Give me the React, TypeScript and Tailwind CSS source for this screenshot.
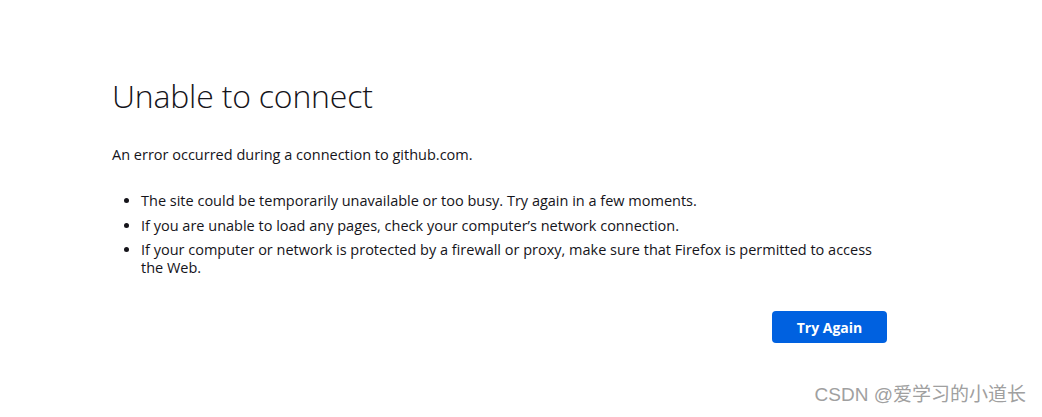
export default function App() {
  const items = [
    "The site could be temporarily unavailable or too busy. Try again in a few moments.",
    "If you are unable to load any pages, check your computer\u2019s network connection.",
    "If your computer or network is protected by a firewall or proxy, make sure that Firefox is permitted to access the Web.",
  ];

  return (
    <div className="relative w-[1042px] h-[417px] bg-white overflow-hidden font-['Open_Sans',sans-serif] text-[#15141a]">
      <main className="w-[775px] ml-[112px] pt-[76px]">
        <h1 className="text-[32px] leading-[40px] font-light tracking-[-0.2px]">Unable to connect</h1>
        <p className="mt-[30px] text-[14.5px] leading-[18px]">An error occurred during a connection to github.com.</p>
        <ul className="mt-[28px] pl-[29px] list-disc text-[14.5px] leading-[18px] w-[770px]">
          {items.map((t) => (
            <li key={t} className="mb-[6.5px]">{t}</li>
          ))}
        </ul>
        <div className="flex justify-end mt-[34px]">
          <button className="w-[115px] h-[32px] rounded-[4px] bg-[#0061e0] text-white text-[14px] font-bold">
            Try Again
          </button>
        </div>
      </main>
      <div className="absolute right-[16px] bottom-[8px] text-[19px] text-[#a0a0a0] font-['Liberation_Sans','Noto_Sans_CJK_SC',sans-serif]">
        CSDN @爱学习的小道长
      </div>
    </div>
  );
}
